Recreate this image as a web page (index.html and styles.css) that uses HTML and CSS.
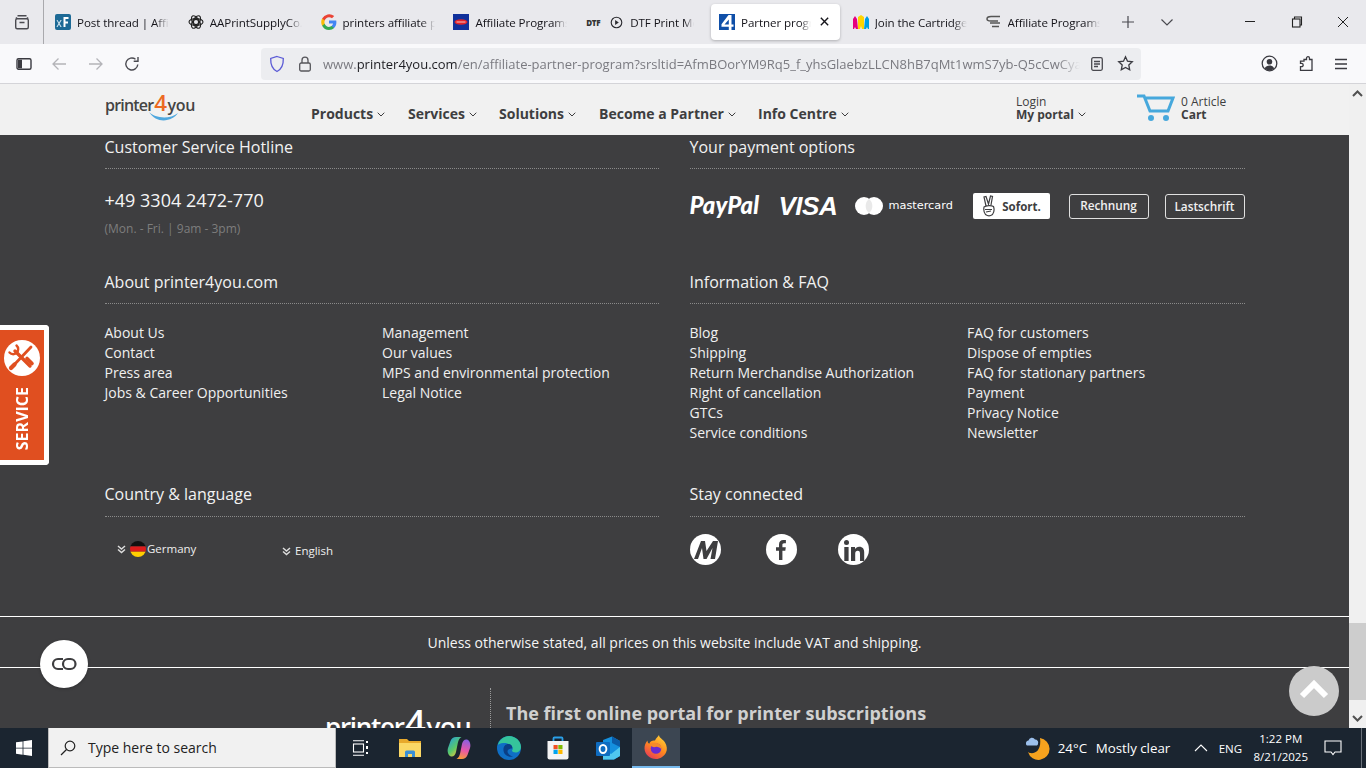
FILE: index.html
```html
<!DOCTYPE html>
<html lang="en">
<head>
<meta charset="utf-8">
<title>Partner program</title>
<link rel="stylesheet" href="styles.css">
</head>
<body>
<div class="screen">
  <div class="tabbar">
    <div class="tablist-btn"><svg width="18" height="18" viewBox="0 0 18 18" fill="none" stroke="#4a4a50" stroke-width="1.4"><rect x="2.7" y="5.7" width="12.6" height="10" rx="1.5"/><path d="M4.5 2.7h9M3.5 5.7V4.2M14.5 5.7V4.2M6.5 9.5h5"/></svg></div>
    <div class="tabs">
      <div class="tab"><svg class="fav" viewBox="0 0 16 16"><rect width="16" height="16" rx="2" fill="#1d6a96"/><path d="M8.500 3h5v2h-3v2.500h2.500v2H10.500V13h-2z" fill="#fff"/><path d="M2.500 6l1.500 2.500L5.500 6h1.200L4.700 9.500l2 3.500H5.400L4 10.600 2.600 13H1.400l2-3.500L1.500 6z" fill="#cfe3ef"/></svg><span class="tab-title">Post thread | Affiliate</span></div>
      <div class="tab"><svg class="fav" viewBox="0 0 16 16" fill="none" stroke="#222" stroke-width="1.100"><circle cx="8" cy="8" r="2.600"/><ellipse cx="8" cy="8" rx="7" ry="3.400"/><ellipse cx="8" cy="8" rx="7" ry="3.400" transform="rotate(60 8 8)"/><ellipse cx="8" cy="8" rx="7" ry="3.400" transform="rotate(120 8 8)"/></svg><span class="tab-title">AAPrintSupplyCo.com</span></div>
      <div class="tab"><svg class="fav" viewBox="0 0 16 16"><path d="M15.400 8.200c0-.6-.1-1.100-.2-1.600H8v3h4.100a3.600 3.600 0 0 1-1.500 2.300v2h2.500c1.500-1.400 2.300-3.400 2.300-5.700z" fill="#4285f4"/><path d="M8 16c2.100 0 3.900-.7 5.100-1.900l-2.500-2c-.7.500-1.600.8-2.600.8-2 0-3.700-1.400-4.300-3.200H1.100v2A8 8 0 0 0 8 16z" fill="#34a853"/><path d="M3.700 9.700a4.800 4.800 0 0 1 0-3.100v-2H1.100a8 8 0 0 0 0 7.100z" fill="#fbbc05"/><path d="M8 3.200c1.100 0 2.200.4 3 1.100l2.200-2.200A8 8 0 0 0 1.100 4.600l2.600 2C4.300 4.600 6 3.200 8 3.200z" fill="#ea4335"/></svg><span class="tab-title">printers affiliate program</span></div>
      <div class="tab"><svg class="fav" viewBox="0 0 16 16"><rect width="16" height="16" fill="#10309b"/><ellipse cx="8" cy="8" rx="6.500" ry="2.800" fill="#e2232a"/><path d="M3.500 7.500h9v1h-9z" fill="#f6c6c6"/></svg><span class="tab-title">Affiliate Programs</span></div>
      <div class="tab tab-dtf"><span class="dtf">DTF</span><svg class="play" viewBox="0 0 14 14" fill="none" stroke="#2b2b30" stroke-width="1.200"><circle cx="7" cy="7" r="5.700"/><path d="M5.500 4.300l4 2.700-4 2.700z" fill="#2b2b30" stroke="none"/></svg><span class="tab-title tab-title-short">DTF Print Media</span></div>
      <div class="tab tab-active"><svg class="fav" viewBox="0 0 16 16"><rect width="16" height="16" fill="#0f4fa8"/><path d="M9.500 1h3v9.500h2v2.300h-2V16H9.800v-3.200H2.500v-2.500zM9.800 5.500l-4.300 5h4.300z" fill="#fff"/></svg><span class="tab-title tab-title-active">Partner program</span><svg class="tab-close" viewBox="0 0 12 12" stroke="#15141a" stroke-width="1.500"><path d="M2 2l8 8M10 2l-8 8"/></svg></div>
      <div class="tab"><svg class="fav" viewBox="0 0 16 16"><path d="M0 15V5l2-3 2 3 1 10H3l-1-2-1 2z" fill="#e6007e"/><path d="M5 15V3l3-2 3 2v12H9l-1-3-1 3z" fill="#ffd400"/><path d="M11 15l1-10 2-3 2 3v10h-1l-1-2-1 2z" fill="#009fe3"/></svg><span class="tab-title">Join the Cartridge</span></div>
      <div class="tab"><svg class="fav" viewBox="0 0 16 16" fill="none" stroke="#555" stroke-width="1.500"><path d="M14 2.500H5C2.500 2.500 1 3.500 1 5s1.500 2 4 2h7M14 9H4M13 12.500H6"/></svg><span class="tab-title">Affiliate Programs</span></div>
    </div>
    <div class="tab-new"><svg width="16" height="16" viewBox="0 0 16 16" stroke="#4a4a50" stroke-width="1.200"><path d="M8 2v12M2 8h12"/></svg></div>
    <div class="tab-all"><svg width="14" height="14" viewBox="0 0 14 14" fill="none" stroke="#4a4a50" stroke-width="1.200"><path d="M1.500 4.500L7 10l5.500-5.500"/></svg></div>
    <div class="win-controls">
      <svg width="12" height="12" viewBox="0 0 12 12" stroke="#222" stroke-width="1"><path d="M1 5.500h10"/></svg>
      <svg width="12" height="12" viewBox="0 0 12 12" fill="none" stroke="#222" stroke-width="1.100"><rect x="1.500" y="3" width="7.500" height="8"/><path d="M3.500 3V1h7v8H9"/></svg>
      <svg width="12" height="12" viewBox="0 0 12 12" stroke="#222" stroke-width="1"><path d="M1 1l10 10M11 1L1 11"/></svg>
    </div>
  </div>

  <div class="toolbar">
    <svg class="tb-sidebar" width="16" height="16" viewBox="0 0 16 16" fill="none" stroke="#3a3a40" stroke-width="1.400"><rect x="1" y="2.700" width="14" height="10.600" rx="1.500"/><rect x="2" y="3.700" width="4" height="8.600" fill="#3a3a40" stroke="none"/></svg>
    <svg class="tb-back" width="16" height="16" viewBox="0 0 16 16" fill="none" stroke="#b4b4b8" stroke-width="1.300"><path d="M15 8H2M7.500 2.500L2 8l5.500 5.500"/></svg>
    <svg class="tb-fwd" width="16" height="16" viewBox="0 0 16 16" fill="none" stroke="#b4b4b8" stroke-width="1.300"><path d="M1 8h13M8.500 2.500L14 8l-5.500 5.500"/></svg>
    <svg class="tb-reload" width="16" height="16" viewBox="0 0 16 16" fill="none" stroke="#4a4a50" stroke-width="1.400"><path d="M13.800 8.500A6 6 0 1 1 11.500 3.200"/><path d="M14 1v4.300H9.700" /></svg>
    <div class="urlbar">
      <svg class="url-shield" width="16" height="18" viewBox="0 0 16 18" fill="none" stroke="#5b5bd6" stroke-width="1.300"><path d="M8 1.500l6.300 2c.2 6-1.300 10.500-6.300 13-5-2.500-6.500-7-6.300-13z"/></svg>
      <svg class="url-lock" width="14" height="16" viewBox="0 0 14 16" fill="none" stroke="#55555a" stroke-width="1.300"><rect x="1.700" y="7" width="10.600" height="8" rx="1.500"/><path d="M4 7V4.200a3 3 0 0 1 6 0V7"/></svg>
      <div class="url-text">www.<b>printer4you.com</b>/en/affiliate-partner-program?srsltid=AfmBOorYM9Rq5_f_yhsGlaebzLLCN8hB7qMt1wmS7yb-Q5cCwCyab</div>
      <svg class="url-reader" width="14" height="16" viewBox="0 0 14 16" fill="none" stroke="#4a4a50" stroke-width="1.300"><rect x="1.700" y="1.700" width="10.600" height="12.600" rx="1.500"/><path d="M4 5.500h6M4 8h6M4 10.500h4"/></svg>
      <svg class="url-star" width="17" height="17" viewBox="0 0 17 17" fill="none" stroke="#3a3a40" stroke-width="1.300"><path d="M8.500 1.800l2 4.400 4.800.6-3.500 3.300.9 4.700-4.200-2.300-4.200 2.300.9-4.700L1.700 6.800l4.800-.6z"/></svg>
    </div>
    <div class="tb-right">
      <svg width="17" height="17" viewBox="0 0 17 17"><circle cx="8.500" cy="8.500" r="7.300" fill="none" stroke="#3a3a40" stroke-width="1.300"/><circle cx="8.500" cy="6.800" r="2.800" fill="#3a3a40"/><path d="M3.700 13.500c1-2.300 2.800-3 4.800-3s3.800.7 4.800 3a7 7 0 0 1-9.600 0z" fill="#3a3a40"/></svg>
      <svg width="16" height="17" viewBox="0 0 16 17" fill="none" stroke="#3a3a40" stroke-width="1.300"><path d="M6 3.500h2.500V2.200a1.500 1.500 0 0 1 3 0v1.300H14v10.800H2.500v-3.600h1a1.700 1.700 0 0 0 0-3.400h-1V5.200H6z" transform="translate(0 1)"/></svg>
      <svg width="14" height="14" viewBox="0 0 14 14" stroke="#3a3a40" stroke-width="1.300"><path d="M1 2.500h12M1 7h12M1 11.500h12"/></svg>
    </div>
  </div>

  <div class="viewport">
    <div class="page">
      <header class="site-header">
        <div class="logo logo-head"><span class="logo-a">printer</span><span class="logo-4">4</span><span class="logo-b">you</span>
          <svg class="logo-swoosh" width="30" height="11" viewBox="0 0 30 11"><path d="M0 0c6 6 20 8 29 1C24 9 8 13 0 0z" fill="#4ea7de"/></svg>
        </div>
        <nav class="nav">
          <span class="nav-item nav-products">Products<svg class="chev" viewBox="0 0 8 5"><path d="M.7.7L4 4l3.300-3.300"/></svg></span>
          <span class="nav-item nav-services">Services<svg class="chev" viewBox="0 0 8 5"><path d="M.7.7L4 4l3.300-3.300"/></svg></span>
          <span class="nav-item nav-solutions">Solutions<svg class="chev" viewBox="0 0 8 5"><path d="M.7.7L4 4l3.300-3.300"/></svg></span>
          <span class="nav-item nav-partner">Become a Partner<svg class="chev" viewBox="0 0 8 5"><path d="M.7.7L4 4l3.300-3.300"/></svg></span>
          <span class="nav-item">Info Centre<svg class="chev" viewBox="0 0 8 5"><path d="M.7.7L4 4l3.300-3.300"/></svg></span>
        </nav>
        <div class="login"><div>Login</div><div class="strong">My portal<svg class="chev" viewBox="0 0 8 5"><path d="M.7.7L4 4l3.300-3.300"/></svg></div></div>
        <svg class="cart" width="38" height="28" viewBox="0 0 38 28" fill="none" stroke="#46a8dc" stroke-width="3"><path d="M0 2h7l6 15h18l5-13H8"/><circle cx="14" cy="24" r="3" fill="#46a8dc" stroke="none"/><circle cx="29" cy="24" r="3" fill="#46a8dc" stroke="none"/></svg>
        <div class="cart-text"><div>0 Article</div><div class="strong">Cart</div></div>
      </header>

      <footer class="footer">
        <div class="foot-grid">
          <section class="col hotline">
            <h3 class="foot-h">Customer Service Hotline</h3>
            <div class="phone">+49 3304 2472-770</div>
            <div class="hours">(Mon. - Fri. | 9am - 3pm)</div>
          </section>
          <section class="col hotline">
            <h3 class="foot-h">Your payment options</h3>
            <div class="payments">
              <span class="pay-paypal">PayPal</span>
              <span class="pay-visa">VISA</span>
              <span class="pay-mc"><svg width="28" height="18" viewBox="0 0 28 18"><circle cx="9" cy="9" r="9" fill="#fff"/><circle cx="19" cy="9" r="9" fill="#fff"/><path d="M14 2a9 9 0 0 1 0 14 9 9 0 0 1 0-14z" fill="#e9e9e9"/></svg><span>mastercard</span></span>
              <span class="pay-sofort"><svg width="16" height="22" viewBox="0 0 16 22" fill="none" stroke="#3e3e40" stroke-width="1.200"><path d="M5 11L3 2l2-.5L7.500 9 9.500 1l2 .5L10 10M3 12c2-1.500 7-2 9.500-.5 1 3 .5 6-1 8-2 1.500-5 1.500-7 0-1.500-2-2-5-1.500-7.500zM4 14.500h7M5 17l5-1"/></svg>Sofort.</span>
              <span class="pay-box pay-rechnung">Rechnung</span>
              <span class="pay-box pay-last">Lastschrift</span>
            </div>
          </section>

          <section class="col links-sec">
            <h3 class="foot-h">About printer4you.com</h3>
            <div class="link-cols">
              <ul class="links"><li>About Us</li><li>Contact</li><li>Press area</li><li>Jobs &amp; Career Opportunities</li></ul>
              <ul class="links"><li>Management</li><li>Our values</li><li>MPS and environmental protection</li><li>Legal Notice</li></ul>
            </div>
          </section>
          <section class="col links-sec">
            <h3 class="foot-h">Information &amp; FAQ</h3>
            <div class="link-cols">
              <ul class="links"><li>Blog</li><li>Shipping</li><li>Return Merchandise Authorization</li><li>Right of cancellation</li><li>GTCs</li><li>Service conditions</li></ul>
              <ul class="links"><li>FAQ for customers</li><li>Dispose of empties</li><li>FAQ for stationary partners</li><li>Payment</li><li>Privacy Notice</li><li>Newsletter</li></ul>
            </div>
          </section>

          <section class="col conn-sec">
            <h3 class="foot-h foot-h-tall">Country &amp; language</h3>
            <div class="lang-row">
              <span class="lang-country"><svg class="dbl" viewBox="0 0 9 9"><path d="M1 1l3.500 3L8 1M1 4.500l3.500 3 3.500-3"/></svg><svg class="flag" viewBox="0 0 16 16"><defs><clipPath id="fc"><circle cx="8" cy="8" r="8"/></clipPath></defs><g clip-path="url(#fc)"><rect width="16" height="5.400" fill="#111"/><rect y="5.400" width="16" height="5.300" fill="#dd1c1c"/><rect y="10.700" width="16" height="5.300" fill="#ffce00"/></g></svg>Germany</span>
              <span class="lang-lang"><svg class="dbl" viewBox="0 0 9 9"><path d="M1 1l3.500 3L8 1M1 4.500l3.500 3 3.500-3"/></svg>English</span>
            </div>
          </section>
          <section class="col conn-sec">
            <h3 class="foot-h foot-h-tall">Stay connected</h3>
            <div class="social">
              <svg width="31" height="31" viewBox="0 0 31 31"><circle cx="15.500" cy="15.500" r="15.500" fill="#fff"/><path d="M4 25L11 7h4l1.500 10L23 7h5l-3 18h-4.500l2-11L16.500 25h-3l-1.500-11-4 11z" fill="#3e3e40"/></svg>
              <svg width="31" height="31" viewBox="0 0 31 31"><circle cx="15.500" cy="15.500" r="15.500" fill="#fff"/><path d="M13 26V16.800h-3v-3.600h3v-2.700C13 7.600 14.700 6 17.300 6c1.200 0 2.300.1 2.600.1v3.200h-1.800c-1.400 0-1.700.7-1.700 1.700v2.200h3.400l-.5 3.600h-2.900V26z" fill="#3e3e40"/></svg>
              <svg width="31" height="31" viewBox="0 0 31 31"><circle cx="15.500" cy="15.500" r="15.500" fill="#fff"/><circle cx="8.500" cy="8.500" r="2.500" fill="#3e3e40"/><path d="M6.300 13h4.300v14H6.300zM13 13h4v2c.8-1.300 2.200-2.300 4.200-2.300 3.700 0 5 2.300 5 5.700V27H22v-7.300c0-1.700-.5-3-2.200-3-1.800 0-2.600 1.300-2.600 3V27H13z" fill="#3e3e40"/></svg>
            </div>
          </section>
        </div>

        <div class="vat">Unless otherwise stated, all prices on this website include VAT and shipping.</div>

        <div class="claim">
          <div class="logo logo-big"><span class="logo-a">printer</span><span class="logo-4">4</span><span class="logo-b">you</span></div>
          <div class="claim-text">The first online portal for printer subscriptions</div>
        </div>
      </footer>
    </div>

    <div class="scrollbar">
      <svg class="sb-arrow" width="11" height="7" viewBox="0 0 11 7" fill="none" stroke="#505050" stroke-width="2"><path d="M1 6l4.500-4.500L10 6"/></svg>
      <div class="sb-track"><div class="sb-thumb"></div></div>
      <svg class="sb-arrow" width="11" height="7" viewBox="0 0 11 7" fill="none" stroke="#505050" stroke-width="2"><path d="M1 1l4.500 4.500L10 1"/></svg>
    </div>

    <div class="service-tab">
      <div class="service-circle"><svg width="30" height="30" viewBox="0 0 30 30" fill="none" stroke="#e04f20" stroke-linecap="round"><path d="M8 8l15 15" stroke-width="3.400"/><path d="M24 4L6 23" stroke-width="2.800"/><path d="M9.500 2.500A5 5 0 0 1 9.500 10M2.500 9.500A5 5 0 0 0 10 9.500" stroke-width="2.400"/><path d="M20 15.500l5 5" stroke-width="3.600"/><path d="M4 25l3.500-3.500" stroke-width="4.200"/></svg></div>
      <span class="service-label">SERVICE</span>
    </div>

    <div class="chat-bubble"><svg width="26" height="14" viewBox="0 0 26 14" fill="none" stroke="#3e3e40" stroke-width="2.200"><path d="M12 2H7a5 5 0 0 0 0 10h5"/><rect x="12" y="2" width="12.500" height="10" rx="5"/></svg></div>

    <div class="to-top"><svg width="30" height="20" viewBox="0 0 30 20" fill="none" stroke="#fff" stroke-width="6"><path d="M3 17L15 5l12 12"/></svg></div>
  </div>

  <div class="taskbar">
    <div class="start"><svg width="16" height="16" viewBox="0 0 16 16" fill="#fff"><path d="M0 2.300l6.600-.9v6.300H0zM7.400 1.300L16 0v7.700H7.400zM0 8.400h6.600v6.300L0 13.800zM7.400 8.400H16V16l-8.600-1.200z"/></svg></div>
    <div class="search"><svg width="16" height="16" viewBox="0 0 16 16" fill="none" stroke="#222" stroke-width="1.200"><circle cx="10" cy="6" r="4.800"/><path d="M6.500 9.500L1 15"/></svg><span>Type here to search</span></div>
    <div class="task-icons">
      <span class="ti"><svg width="18" height="16" viewBox="0 0 18 16" fill="none" stroke="#fff" stroke-width="1.100"><path d="M1 .7h11M1 15.300h11"/><rect x="1.500" y="4" width="10" height="8"/><path d="M15 1v2M15 6v3M15 12v2" stroke-width="2"/></svg></span>
      <span class="ti"><svg width="24" height="24" viewBox="0 0 24 24"><path d="M1 3h8l2 2h12v16H1z" fill="#e8a92c"/><rect x="1" y="7" width="22" height="14" fill="#fbd866"/><path d="M7 21v-5a1.500 1.500 0 0 1 1.500-1.500h7A1.500 1.500 0 0 1 17 16v5h-3v-3h-4v3z" fill="#3a8fd6"/></svg></span>
      <span class="ti"><svg width="24" height="24" viewBox="0 0 24 24"><defs><linearGradient id="cpa" x1="0" y1="0" x2=".7" y2="1"><stop offset="0" stop-color="#1f9be8"/><stop offset=".6" stop-color="#59c96a"/><stop offset="1" stop-color="#f2c63a"/></linearGradient><linearGradient id="cpb" x1=".6" y1="0" x2=".4" y2="1"><stop offset="0" stop-color="#8a5fe0"/><stop offset=".55" stop-color="#e857a8"/><stop offset="1" stop-color="#f59a3c"/></linearGradient></defs><path d="M9 1h5.500c-2 1-3 3-3.700 6L9 16c-.6 3-2.500 5-5 4.500C1 19.500 0 15 1 12l2.500-7C4.500 2.500 6.500 1 9 1z" fill="url(#cpa)"/><path d="M15 23H9.500c2-1 3-3 3.700-6L15 8c.6-3 2.500-5 5-4.500 3 1 4 5.500 3 8.500l-2.500 7c-1 2.500-3 4-5.500 4z" fill="url(#cpb)"/></svg></span>
      <span class="ti"><svg width="24" height="24" viewBox="0 0 24 24"><circle cx="12" cy="12" r="12" fill="#0f6fc6"/><path d="M.8 9C2.500 3.500 7 0 12 0c6.600 0 12 5 12 11 0 3.500-2.700 5.500-5.500 5.500-2 0-3.500-.8-3.500-2 1-1 1-2.500.2-3.700C13.500 8 9.500 6.500 6 7 3.500 7.300 1.800 8 .8 9z" fill="#35c49b"/><path d="M16 20.500c-4.500 1-9-1.500-9.500-6C6 10 9 7.500 12 8c2.800.5 3.700 3 3 4.500-1 .2-2.800 0-4 1.500-1.300 1.800 0 5 5 6.500z" fill="#0a3f86"/></svg></span>
      <span class="ti"><svg width="24" height="24" viewBox="0 0 24 24"><path d="M7.500 6V2.500a1 1 0 0 1 1-1h7a1 1 0 0 1 1 1V6" fill="none" stroke="#2aa0e8" stroke-width="1.800"/><path d="M1.500 5h21v16.500a2 2 0 0 1-2 2h-17a2 2 0 0 1-2-2z" fill="#f4f4f4"/><rect x="7.500" y="9" width="4.200" height="4.200" fill="#f25022"/><rect x="12.300" y="9" width="4.200" height="4.200" fill="#7fba00"/><rect x="7.500" y="13.800" width="4.200" height="4.200" fill="#00a4ef"/><rect x="12.300" y="13.800" width="4.200" height="4.200" fill="#ffb900"/></svg></span>
      <span class="ti"><svg width="24" height="24" viewBox="0 0 24 24"><path d="M7 4l9-3.500L24 5v15l-6 3.500H7z" fill="#1490df"/><path d="M16 .5L24 5v6l-8-4z" fill="#0a5ca8"/><path d="M7 13l8 5 9-7v9l-6 3.500H7z" fill="#50c8f0"/><rect x="0" y="6" width="14" height="14" rx="1" fill="#0f6cc0"/><ellipse cx="7" cy="13" rx="3.400" ry="4" fill="none" stroke="#fff" stroke-width="1.900"/></svg></span>
      <span class="ti ti-active"><svg width="24" height="24" viewBox="0 0 24 24"><defs><linearGradient id="ff" x1=".8" y1="0" x2=".2" y2="1"><stop offset="0" stop-color="#ffd43a"/><stop offset=".5" stop-color="#ff8a1e"/><stop offset="1" stop-color="#e8365a"/></linearGradient></defs><path d="M15 0c0 3 4 4 6 7.500 2 3.500 2.500 7 1 10-2 4-6 6.500-10 6.500C6 24 .8 19.500.5 13.500.4 10.500 1.500 7.500 3.500 5.500c0 2 .8 2.800 1.800 3.200C6 6 9 5 11 5.500c1-2.500 3-3.500 4-5.500z" fill="url(#ff)"/><circle cx="12" cy="13.500" r="5.300" fill="#6a2bd0"/><path d="M6 10c2.500-2.500 6-3 9-1 2 1.500 3 3.500 2.500 5.500-1.500-2-4-3-6-2.500-2 .5-4-.2-5.500-2z" fill="#f58a2a"/></svg></span>
    </div>
    <div class="tray">
      <svg class="weather" width="24" height="24" viewBox="0 0 24 24"><path d="M14 2a11 11 0 1 1-12 14c4 3 14 1 12-14z" fill="#f5a21e"/><path d="M1 9.500a2.800 2.800 0 0 1 1.500-5A3.500 3.500 0 0 1 9 3.500 3 3 0 0 1 12 7.500a2 2 0 0 1-1 2z" fill="#9cc0ec"/></svg>
      <span class="temp">24°C</span>
      <span class="cond">Mostly clear</span>
      <svg class="tray-up" width="14" height="8" viewBox="0 0 14 8" fill="none" stroke="#fff" stroke-width="1.100"><path d="M1 7l6-6 6 6"/></svg>
      <span class="eng">ENG</span>
      <div class="clock"><div>1:22 PM</div><div>8/21/2025</div></div>
      <svg class="notif" width="18" height="16" viewBox="0 0 18 16" fill="none" stroke="#fff" stroke-width="1.100"><path d="M1 1h16v11h-6l-2 2.500L7 12H1z"/></svg>
      <span class="show-desk"></span>
    </div>
  </div>
</div>
</body>
</html>
```

FILE: styles.css
```css
* { box-sizing: border-box; }
html, body { margin: 0; padding: 0; overflow: hidden; }
body { font-family: "Open Sans", sans-serif; background: #3e3e40; }
.screen { width: 1366px; height: 768px; display: flex; flex-direction: column; overflow: hidden; }

/* browser tab strip */
.tabbar { height: 44px; flex: none; background: #e9e9ed; display: flex; align-items: center; color: #15141a; }
.tablist-btn { width: 44px; height: 44px; border-right: 1px solid #a9a9ad; display: flex; align-items: center; justify-content: center; flex: none; }
.tabs { display: flex; padding-left: 2px; width: 1068px; flex: none; }
.tab { width: 132.800px; flex: none; height: 36px; display: flex; align-items: center; padding-left: 9px; gap: 6px; font-size: 11.600px; letter-spacing: -.08px; white-space: nowrap; position: relative; }
.tab-dtf { width: 133.800px; }
.tab-active { background: #fff; border-radius: 4px; width: 129px; margin-right: 3.800px; box-shadow: 0 1px 3px rgba(0,0,0,.25); padding-left: 8px; }
.fav { width: 16px; height: 16px; flex: none; }
.tab-title { width: 92px; overflow: hidden; -webkit-mask-image: linear-gradient(90deg, #000 85%, transparent); mask-image: linear-gradient(90deg, #000 85%, transparent); }
.tab-title-short { width: 64px; margin-left: 1px; }
.tab-title-active { width: 70px; }
.tab-close { width: 11px; height: 11px; position: absolute; left: 108px; top: 12px; }
.dtf { font-size: 8px; font-weight: 800; width: 16px; letter-spacing: -.3px; color: #333; }
.play { width: 13px; height: 13px; flex: none; margin-left: 2px; }
.tab-new { width: 16px; margin-left: 8px; display: flex; flex: none; }
.tab-all { width: 14px; margin-left: 24px; display: flex; flex: none; }
.win-controls { margin-left: 70px; display: flex; gap: 34.500px; align-items: center; flex: none; }
.win-controls svg { display: block; }

/* browser toolbar */
.toolbar { height: 40px; flex: none; background: #f9f9fb; border-bottom: 1px solid #d4d4d8; display: flex; align-items: center; padding-left: 16px; }
.tb-back { margin-left: 19px; }
.tb-fwd { margin-left: 21px; }
.tb-reload { margin-left: 20px; }
.urlbar { margin-left: 121px; width: 880px; height: 32px; background: #ecedf0; border-radius: 4px; display: flex; align-items: center; padding-left: 8px; flex: none; }
.url-lock { margin-left: 13px; flex: none; }
.url-text { margin-left: 11px; width: 757px; flex: none; overflow: hidden; white-space: nowrap; font-size: 13px; color: #7a7a80; -webkit-mask-image: linear-gradient(90deg, #000 97%, transparent); mask-image: linear-gradient(90deg, #000 97%, transparent); }
.url-text b { font-weight: 400; color: #1d1d22; }
.url-reader { margin-left: 10px; flex: none; }
.url-star { margin-left: 13px; flex: none; }
.tb-right { margin-left: 120px; display: flex; align-items: center; gap: 20px; flex: none; }

/* viewport */
.viewport { flex: 1; min-height: 0; display: flex; position: relative; overflow: hidden; }
.page { width: 1349px; flex: none; overflow: hidden; }
.scrollbar { width: 17px; flex: none; background: #f0f0f0; display: flex; flex-direction: column; align-items: center; padding: 6px 0 6px; }
.sb-track { flex: 1; width: 17px; padding-top: 526px; }
.sb-thumb { height: 77px; width: 17px; background: #cdcdcd; }
.sb-arrow { flex: none; }

/* site header */
.site-header { height: 51px; background: #f1f1f1; display: flex; align-items: flex-start; padding-left: 105px; color: #3e3e40; }
.logo { display: flex; align-items: baseline; position: relative; flex: none; font-weight: 600; white-space: nowrap; }
.logo-head { width: 206px; font-size: 16px; line-height: 24px; padding-top: 8px; color: #444; }
.logo-a { letter-spacing: -.05em; }
.logo-b { letter-spacing: -.02em; }
.logo-4 { font-size: 1.400em; font-weight: 600; line-height: 1; margin: 0 .02em 0 .04em; }
.logo-head .logo-4 { color: #ec6a22; }
.logo-swoosh { position: absolute; left: 44px; top: 28px; }
.nav { display: flex; padding-top: 20px; width: 705px; flex: none; font-size: 14px; font-weight: 700; line-height: 20px; }
.nav-item { white-space: nowrap; }
.nav-products { width: 97px; }
.nav-services { width: 91px; }
.nav-solutions { width: 100px; }
.nav-partner { width: 159px; }
.chev { width: 8px; height: 5px; margin-left: 4px; vertical-align: 2px; fill: none; stroke: #3e3e40; stroke-width: 1; }
.login { width: 121px; flex: none; font-size: 12px; line-height: 13px; padding-top: 11px; }
.strong { font-weight: 700; }
.cart { margin-top: 10px; flex: none; }
.cart-text { margin-left: 6px; font-size: 12px; line-height: 13px; padding-top: 11px; }

/* footer */
.footer { background: #3e3e40; color: #fff; }
.foot-grid { display: grid; grid-template-columns: 554px 555px; column-gap: 31px; padding-left: 104.500px; }
.foot-h { margin: 0; font-size: 16px; font-weight: 400; line-height: 24px; height: 34px; border-bottom: 1px dotted #8a8a8a; color: #f2f2f2; }
.foot-h-tall { height: 35px; }
.hotline { height: 135px; }
.phone { font-size: 18px; line-height: 26px; margin-top: 18px; color: #f5f5f5; }
.hours { font-size: 12px; line-height: 16px; margin-top: 8px; color: #7d7d7d; }
.links-sec { height: 212px; }
.link-cols { display: grid; grid-template-columns: 277.500px 1fr; margin-top: 19px; }
.links { list-style: none; margin: 0; padding: 0; font-size: 14px; line-height: 20px; color: #f0f0f0; }
.conn-sec { height: 134px; }
.payments { display: flex; align-items: center; height: 26px; margin-top: 24px; position: relative; }
.pay-paypal { width: 89px; font-family: "Lato", sans-serif; font-weight: 900; font-style: italic; font-size: 24px; flex: none; padding-bottom: 3px; }
.pay-visa { width: 76px; font-family: "Liberation Sans", sans-serif; font-weight: 700; font-style: italic; font-size: 26px; letter-spacing: -.5px; flex: none; }
.pay-mc { display: flex; align-items: center; gap: 6px; width: 118px; flex: none; font-family: "DejaVu Sans", sans-serif; font-size: 11.300px; padding-bottom: 1px; }
.pay-mc svg { flex: none; }
.pay-sofort { width: 77px; height: 26px; background: #fff; border-radius: 2px; color: #3e3e40; font-weight: 700; font-size: 11.500px; display: flex; align-items: center; justify-content: center; gap: 5px; flex: none; margin-right: 19px; }
.pay-box { height: 25px; border: 1.500px solid #e0e0e0; border-radius: 3px; font-weight: 600; font-size: 11.800px; display: flex; align-items: center; justify-content: center; flex: none; color: #f0f0f0; }
.pay-rechnung { width: 80px; margin-right: 16px; padding-bottom: 2px; }
.pay-last { width: 80px; }
.lang-row { display: flex; padding-top: 22px; padding-left: 12.500px; font-size: 11.500px; color: #eee; line-height: 16px; }
.lang-country { display: flex; align-items: center; width: 165px; flex: none; }
.lang-lang { display: flex; align-items: center; padding-top: 4px; }
.dbl { width: 9px; height: 9px; fill: none; stroke: #ddd; stroke-width: 1.500; flex: none; margin-right: 4px; }
.flag { width: 16px; height: 16px; margin-right: 1px; flex: none; }
.social { display: flex; gap: 45px; margin-top: 17px; }
.social svg { display: block; flex: none; }
.social svg:nth-child(2) { margin-right: -4px; }
.vat { border-top: 1px solid #fff; border-bottom: 1px solid #fff; height: 52px; font-size: 14px; display: flex; align-items: center; justify-content: center; color: #f5f5f5; }
.claim { display: flex; padding-top: 20px; height: 60px; }
.logo-big { margin-left: 325px; width: 165px; font-size: 26px; line-height: 30px; padding-top: 16px; color: #fff; }
.claim-text { border-left: 1px dotted #9a9a9a; padding-left: 15px; height: 60px; font-size: 18px; font-weight: 700; line-height: 50px; color: #d0d0d0; white-space: nowrap; }

/* floating items */
.service-tab { position: absolute; left: 0; top: 241px; width: 49px; height: 140px; background: #e04f20; border: 5px solid #fff; border-left: 0; border-radius: 0 4px 4px 0; display: flex; flex-direction: column; align-items: center; }
.service-circle { width: 36px; height: 36px; margin-top: 10px; background: #fff; border-radius: 50%; display: flex; align-items: center; justify-content: center; flex: none; }
.service-label { writing-mode: vertical-rl; transform: rotate(180deg); color: #fff; font-weight: 700; font-size: 16px; line-height: 20px; margin-top: 11px; }
.chat-bubble { position: absolute; left: 40px; top: 556px; width: 48px; height: 48px; background: #fff; border-radius: 50%; display: flex; align-items: center; justify-content: center; box-shadow: 0 1px 3px rgba(0,0,0,.25); }
.to-top { position: absolute; left: 1289px; top: 582px; width: 50px; height: 50px; background: #cbcbcb; border-radius: 50%; display: flex; align-items: center; justify-content: center; padding-bottom: 4px; }

/* taskbar */
.taskbar { height: 40px; flex: none; background: #1b2530; display: flex; align-items: center; color: #fff; }
.start { width: 48px; display: flex; justify-content: center; flex: none; }
.search { width: 288px; height: 40px; background: #f1f1f1; border: 1px solid #bbb; border-top: 0; display: flex; align-items: center; padding-left: 11px; gap: 12px; color: #222; font-size: 14px; flex: none; }
.task-icons { display: flex; flex: none; }
.ti { width: 49.400px; height: 40px; display: flex; align-items: center; justify-content: center; flex: none; }
.ti-active { width: 48px; margin-right: 1.400px; background: #3c4652; border-bottom: 2px solid #76b9ed; }
.tray { display: flex; align-items: center; margin-left: 344px; height: 40px; flex: none; font-size: 13.300px; }
.weather { flex: none; }
.temp { margin-left: 8px; width: 38px; flex: none; }
.cond { width: 98px; flex: none; }
.tray-up { flex: none; margin-right: 11px; }
.eng { font-size: 11.500px; width: 32px; flex: none; }
.clock { width: 60px; text-align: center; font-size: 11.500px; line-height: 18px; flex: none; }
.notif { margin-left: 13px; flex: none; }
.show-desk { width: 1px; height: 40px; background: #6a717a; margin-left: 19px; flex: none; }
```
